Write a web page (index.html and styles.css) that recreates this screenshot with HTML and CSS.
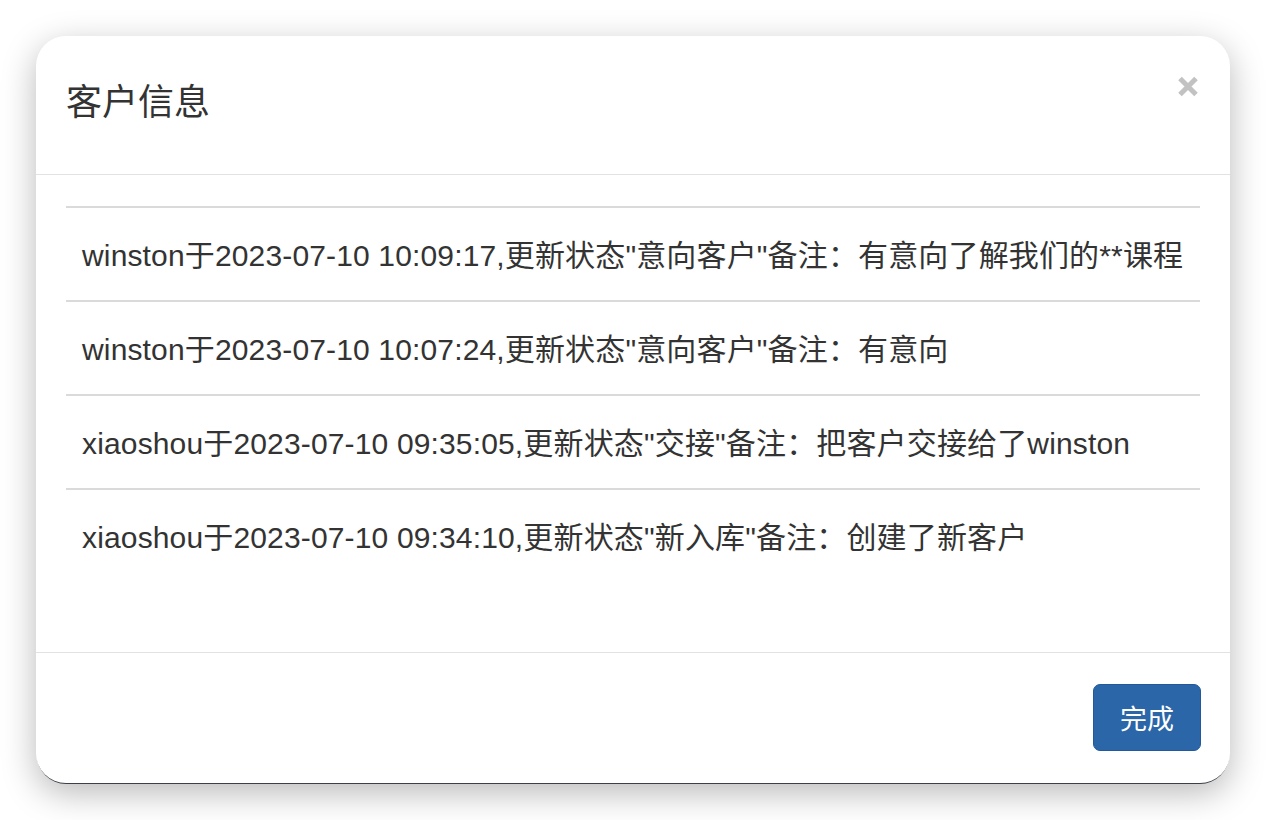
FILE: index.html
```html
<!DOCTYPE html>
<html lang="zh">
<head>
<meta charset="utf-8">
<title>客户信息</title>
<link rel="stylesheet" href="styles.css">
</head>
<body>
<div class="modal">
  <div class="modal-header">
    <h4 class="modal-title">客户信息</h4>
    <button class="close" type="button" aria-label="Close">
      <svg width="22" height="21" viewBox="0 0 22 21"><path d="M3 2.5 L19 18.5 M19 2.5 L3 18.5" stroke="#c2c2c2" stroke-width="5" stroke-linecap="butt"/></svg>
    </button>
  </div>
  <div class="modal-body">
    <ul class="list-group">
      <li class="list-group-item">winston于2023-07-10 10:09:17,更新状态"意向客户"备注：有意向了解我们的**课程</li>
      <li class="list-group-item">winston于2023-07-10 10:07:24,更新状态"意向客户"备注：有意向</li>
      <li class="list-group-item">xiaoshou于2023-07-10 09:35:05,更新状态"交接"备注：把客户交接给了winston</li>
      <li class="list-group-item">xiaoshou于2023-07-10 09:34:10,更新状态"新入库"备注：创建了新客户</li>
    </ul>
  </div>
  <div class="modal-footer">
    <button class="btn-primary" type="button">完成</button>
  </div>
</div>
</body>
</html>
```
FILE: styles.css
```css
html, body {
  margin: 0;
  padding: 0;
  background: #ffffff;
}
body {
  padding: 36px 36px 37px 36px;
  font-family: "Liberation Sans", "Noto Sans CJK SC", sans-serif;
  color: #333333;
  overflow: hidden;
}
.modal {
  width: 1194px;
  height: 747px;
  background: #ffffff;
  border-radius: 30px;
  box-shadow: 0 2px 0 -1px #3b4046, 0 10px 34px rgba(0, 0, 0, 0.28);
  display: flex;
  flex-direction: column;
  box-sizing: border-box;
}
.modal-header {
  height: 139px;
  box-sizing: border-box;
  border-bottom: 1px solid #e2e2e2;
  display: flex;
  justify-content: space-between;
  align-items: flex-start;
  padding: 0 31px 0 30px;
}
.modal-title {
  margin: 0;
  align-self: center;
  font-size: 36px;
  font-weight: normal;
  line-height: 50px;
  color: #333333;
  margin-top: -4px;
}
.close {
  margin-top: 40px;
  padding: 0;
  border: 0;
  background: transparent;
  width: 22px;
  height: 21px;
  display: block;
}
.close svg {
  display: block;
}
.modal-body {
  padding: 31px 30px 0 30px;
  height: 478px;
  box-sizing: border-box;
  border-bottom: 1px solid #e2e2e2;
}
.list-group {
  list-style: none;
  margin: 0;
  padding: 0;
}
.list-group-item {
  border-top: 2px solid #dadada;
  height: 94px;
  box-sizing: border-box;
  padding: 0 16px 2px 16px;
  display: flex;
  align-items: center;
  font-size: 30px;
  letter-spacing: 0.15px;
  color: #333333;
  white-space: nowrap;
}
.modal-footer {
  flex: 1;
  display: flex;
  justify-content: flex-end;
  align-items: flex-start;
  padding: 31px 29px 0 30px;
}
.btn-primary {
  width: 108px;
  height: 67px;
  box-sizing: border-box;
  background: #2a66a8;
  border: 1px solid #23599a;
  border-radius: 7px;
  color: #ffffff;
  font-family: "Liberation Sans", "Noto Sans CJK SC", sans-serif;
  font-size: 27px;
  padding: 0;
}
```
